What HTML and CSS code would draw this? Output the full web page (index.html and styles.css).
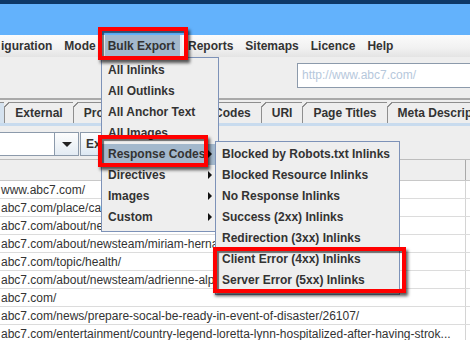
FILE: index.html
```html
<!DOCTYPE html>
<html lang="en">
<head>
  <meta charset="UTF-8" />
  <title>Bulk Export menu</title>
  <link rel="stylesheet" href="styles.css">
</head>
<body>
  <div class="window">
    <div class="titlebar"></div>

    <div class="menubar">
      <span class="menu first">iguration</span>
      <span class="menu">Mode</span>
      <span class="menu open">Bulk Export</span>
      <span class="menu">Reports</span>
      <span class="menu">Sitemaps</span>
      <span class="menu">Licence</span>
      <span class="menu">Help</span>
    </div>

    <div class="toolbar">
      <div class="url">http://www.abc7.com/</div>
    </div>

    <div class="tabs">
      <span class="tab selected">Internal</span>
      <span class="tab">External</span>
      <span class="tab">Protocol</span>
      <span class="tab">Response Codes</span>
      <span class="tab">URI</span>
      <span class="tab">Page Titles</span>
      <span class="tab">Meta Description</span>
    </div>

    <div class="filter">
      <div class="combo"></div>
      <div class="combo-arrow"><span class="down"></span></div>
      <div class="button">Export</div>
    </div>

    <div class="grid">
      <div class="head"><div class="cell"></div></div>
      <div class="row"><div class="cell">www.abc7.com/</div></div>
      <div class="row"><div class="cell">abc7.com/place/cathy-park/</div></div>
      <div class="row"><div class="cell">abc7.com/about/newsteam/</div></div>
      <div class="row"><div class="cell">abc7.com/about/newsteam/miriam-hernandez/</div></div>
      <div class="row"><div class="cell">abc7.com/topic/health/</div></div>
      <div class="row"><div class="cell">abc7.com/about/newsteam/adrienne-alpert/</div></div>
      <div class="row"><div class="cell">abc7.com/</div></div>
      <div class="row"><div class="cell">abc7.com/news/prepare-socal-be-ready-in-event-of-disaster/26107/</div></div>
      <div class="row"><div class="cell">abc7.com/entertainment/country-legend-loretta-lynn-hospitalized-after-having-strok...</div></div>
      <div class="row"><div class="cell"></div></div>
    </div>
  </div>

  <!-- open menus -->
  <div class="popup bulk">
    <div class="item">All Inlinks</div>
    <div class="item">All Outlinks</div>
    <div class="item">All Anchor Text</div>
    <div class="item">All Images</div>
    <div class="item sub-open has-sub">Response Codes</div>
    <div class="item has-sub">Directives</div>
    <div class="item has-sub">Images</div>
    <div class="item has-sub">Custom</div>
  </div>

  <div class="popup codes">
    <div class="item">Blocked by Robots.txt Inlinks</div>
    <div class="item">Blocked Resource Inlinks</div>
    <div class="item">No Response Inlinks</div>
    <div class="item">Success (2xx) Inlinks</div>
    <div class="item">Redirection (3xx) Inlinks</div>
    <div class="item">Client Error (4xx) Inlinks</div>
    <div class="item">Server Error (5xx) Inlinks</div>
  </div>

  <!-- red annotation boxes -->
  <div class="callout c-bulk"></div>
  <div class="callout c-codes"></div>
  <div class="callout c-errors"></div>
</body>
</html>
```

FILE: styles.css
```css
body {
  margin: 0;
  width: 470px;
  height: 340px;
  overflow: hidden;
  font-family: 'Liberation Sans', Arial, sans-serif;
  font-size: 12px;
  color: #333;
  background: #eee;
  position: relative;
}
.window {
  width: 470px;
  height: 340px;
  overflow: hidden;
}
.titlebar {
  height: 31px;
  border-top: 4px solid #0d3867;
  background: #63b2fc;
}

/* menu bar */
.menubar {
  height: 22px;
  display: flex;
  align-items: stretch;
  background: linear-gradient(#fbfbfb, #f1f1f1 60%, #e4e4e4);
  font-weight: bold;
  white-space: nowrap;
}
.menu {
  padding: 0 6px;
  line-height: 22px;
}
.menu.first {
  padding-left: 1px;
}
.menu.open {
  margin-left: 3px;
  padding: 0 5px 0 3px;
  background: #a3b8cc;
  border-right: 2px solid #e9eef3;
}

/* toolbar with url field */
.toolbar {
  height: 35px;
  background: #eee;
  border-bottom: 2px solid #a9a9a9;
}
.url {
  margin-left: 297px;
  margin-top: 6px;
  height: 23px;
  border: 1px solid #8c9aab;
  border-right: none;
  background: #fff;
  color: #b6c8dc;
  line-height: 23px;
  padding-left: 4px;
}

/* tabs */
.tabs {
  height: 21px;
  margin-top: 2px;
  display: flex;
  white-space: nowrap;
  border-bottom: 3px solid #c8dbee;
  margin-left: -59px;
}
.tab {
  position: relative;
  padding: 0 10px;
  line-height: 20px;
  font-weight: bold;
  border: 1px solid #8e8e8e;
  border-bottom: none;
  border-left: none;
  background: #eee;
  flex-shrink: 0;
}
.tab::before {
  content: '';
  position: absolute;
  left: -1px;
  top: -1px;
  width: 7px;
  height: 7px;
  background: linear-gradient(135deg, #eee 3.5px, #8e8e8e 3.5px, #8e8e8e 4.6px, transparent 4.6px);
}
.tab.selected {
  background: #d5e2ef;
}

/* filter row */
.filter {
  height: 24px;
  padding-top: 6px;
  display: flex;
}
.combo {
  width: 54px;
  height: 22px;
  background: #fff;
  border: 1px solid #8c9aab;
  border-left: none;
}
.combo-arrow {
  width: 23px;
  height: 22px;
  border: 1px solid #8c9aab;
  border-left: none;
  background: linear-gradient(#fdfdfd, #e3ebf3);
  display: flex;
  align-items: center;
  justify-content: center;
}
.down {
  width: 0;
  height: 0;
  border-left: 5px solid transparent;
  border-right: 5px solid transparent;
  border-top: 5px solid #222;
}
.button {
  margin-left: 1px;
  width: 80px;
  height: 22px;
  border: 1px solid #8c9aab;
  background: linear-gradient(#fdfdfd, #dde8f3);
  font-weight: bold;
  line-height: 22px;
  padding-left: 5px;
}

/* results grid */
.grid {
  margin-top: 3px;
  background: #fff;
}
.head {
  height: 20px;
  background: #eee;
  border-top: 1px solid #bdbdbd;
  border-bottom: 1px solid #c8c8c8;
}
.row {
  height: 17px;
  border-bottom: 1px solid #dcdcdc;
  background: #fff;
}
.cell {
  width: 466px;
  height: 100%;
  border-right: 1px solid #d4d4d4;
  box-sizing: border-box;
  padding-left: 1px;
  line-height: 18px;
  white-space: nowrap;
  overflow: hidden;
}
.head .cell {
  border-right-color: #a9a9a9;
}

/* popup menus */
.popup {
  position: absolute;
  background: #eee;
  border: 1px solid #7d92b8;
  padding: 2px 0 3px;
  font-weight: bold;
  white-space: nowrap;
}
.bulk {
  left: 101px;
  top: 57px;
  width: 116px;
}
.codes {
  left: 215px;
  top: 141px;
  width: 183px;
}
.item {
  height: 21px;
  line-height: 21px;
  padding-left: 6px;
  position: relative;
}
.item.sub-open {
  background: #a3b8cc;
}
.has-sub::after {
  content: '';
  position: absolute;
  right: 6px;
  top: 6px;
  border-left: 4px solid #111;
  border-top: 4px solid transparent;
  border-bottom: 4px solid transparent;
}

/* red annotation boxes */
.callout {
  position: absolute;
  box-sizing: border-box;
  border: 4px solid #f00;
  box-shadow: 2px 3px 3px rgba(0, 0, 0, 0.65), inset 2px 2px 1px rgba(0, 0, 0, 0.55);
}
.c-bulk {
  left: 98px;
  top: 27px;
  width: 90px;
  height: 33px;
}
.c-codes {
  left: 98px;
  top: 135px;
  width: 110px;
  height: 32px;
}
.c-errors {
  left: 213px;
  top: 247px;
  width: 193px;
  height: 46px;
}
```
